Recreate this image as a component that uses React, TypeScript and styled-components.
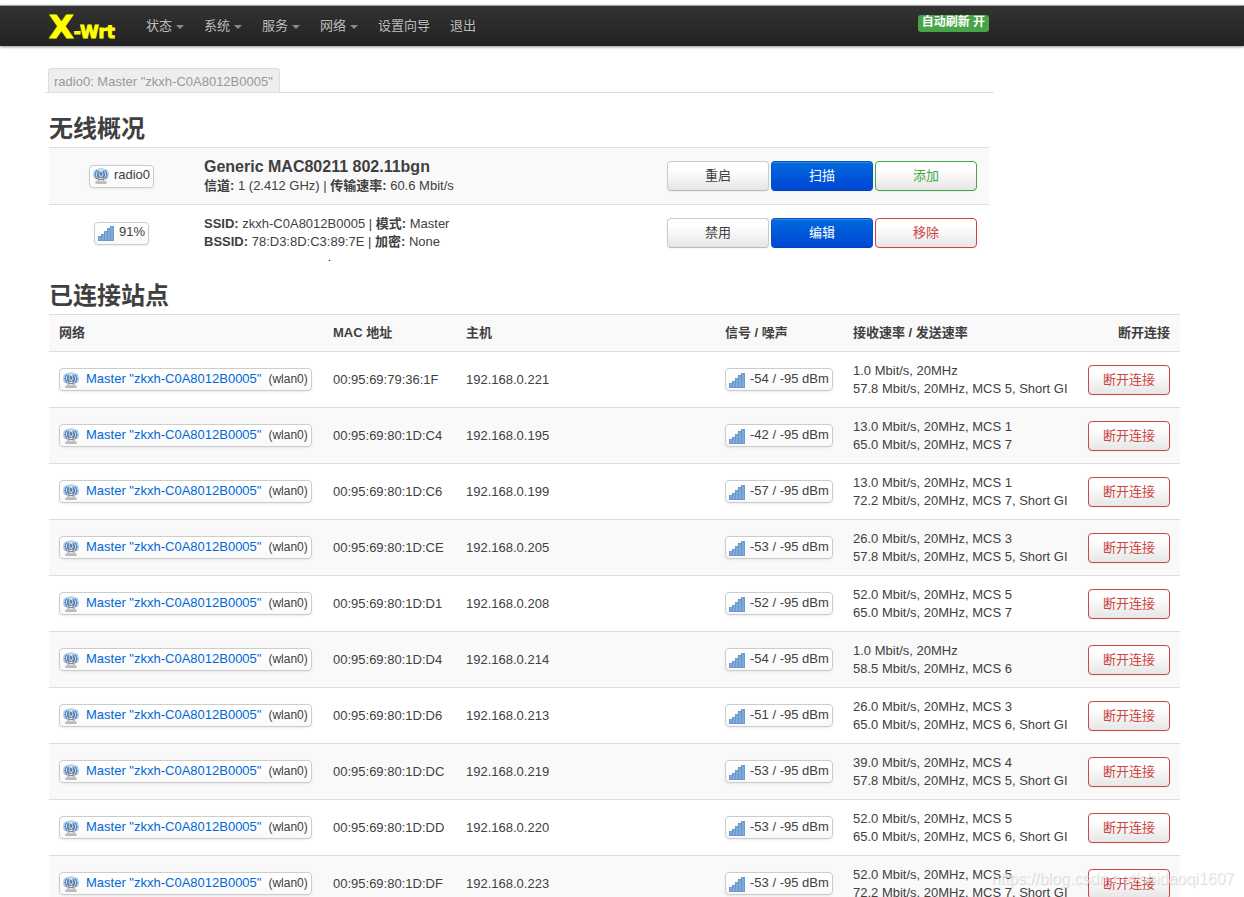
import React from "react";
import styled, { createGlobalStyle, css } from "styled-components";

const GlobalStyle = createGlobalStyle`
  *, *::before, *::after { box-sizing: border-box; }
  body {
    margin: 0;
    background: #fff;
    color: #404040;
    font-family: "Liberation Sans", "Noto Sans CJK SC", sans-serif;
    font-size: 13px;
    line-height: 18px;
  }
  a { color: #0069d6; text-decoration: none; }
`;

const Page = styled.div`
  position: relative;
  height: 100vh;
  overflow: hidden;
  padding-top: 5px;
`;

const TopBar = styled.header`
  height: 41px;
  padding: 0 64px 0 49px;
  border-top: 1px solid #9aa39c;
  background: linear-gradient(to bottom, #333, #222);
  box-shadow: 0 1px 3px rgba(0, 0, 0, 0.25), 0 1px 2px rgba(0, 0, 0, 0.2);
`;

const TopBarInner = styled.div`
  display: flex;
  max-width: 940px;
  height: 40px;
`;

const Brand = styled.a`
  display: block;
  width: 87px;
  color: #ff0;
  font-family: "DejaVu Sans", sans-serif;
  font-size: 32px;
  font-weight: 700;
  line-height: 42px;
  white-space: nowrap;
  -webkit-text-stroke: 1px #ff0;
`;

const BrandSmall = styled.span`
  font-size: 17px;
`;

const Menu = styled.ul`
  display: flex;
  flex: 1;
  margin: 0;
  padding: 0;
  list-style: none;
`;

const MenuLink = styled.a`
  display: flex;
  align-items: center;
  gap: 4px;
  height: 39px;
  padding: 0 10px;
  color: #bfbfbf;
  text-shadow: 0 -1px 0 rgba(0, 0, 0, 0.25);
`;

const Caret = styled.span`
  width: 8px;
  height: 4px;
  margin-top: 2px;
  border-left: 4px solid transparent;
  border-right: 4px solid transparent;
  border-top: 4px solid #8a8a8a;
`;

const RefreshBadge = styled.button`
  align-self: flex-start;
  height: 17px;
  margin-top: 9px;
  padding: 0 4px 2px;
  border: 0;
  border-radius: 3px;
  background: #46a546;
  color: #fff;
  font: bold 12px/15px "Liberation Sans", "Noto Sans CJK SC", sans-serif;
  white-space: nowrap;
`;

const Main = styled.main`
  padding: 22px 64px 0 49px;
`;

const Tabs = styled.nav`
  display: flex;
  max-width: 949px;
  margin-left: -4px;
  padding-left: 3px;
  border-bottom: 1px solid #ddd;
`;

const Tab = styled.a`
  height: 24px;
  padding: 0 6px 0 5px;
  border: 1px solid #ddd;
  border-bottom: 0;
  border-radius: 4px 4px 0 0;
  background: #eee;
  color: #999;
  line-height: 26px;
`;

const Title = styled.h2`
  margin: 18px 0 0;
  font-size: 24px;
  line-height: 36px;
`;

const StationsTitle = styled(Title)`
  margin-top: 17px;
`;

const cellBase = css`
  padding: 0 10px;
  border-top: 1px solid #ddd;
  text-align: left;
  vertical-align: middle;
`;

const Overview = styled.table`
  width: 100%;
  max-width: 940px;
  border-collapse: separate;
  border-spacing: 0;
  table-layout: fixed;

  td { ${cellBase} height: 57px; }
  tr:nth-child(odd) td { background: #f9f9f9; }
  td:first-child { width: 145px; text-align: center; }
  td:last-child { width: 334px; padding-right: 12px; }
`;

const DeviceName = styled.span`
  display: block;
  font-size: 16px;
  font-weight: 700;
  line-height: 20px;
`;

const Actions = styled.div`
  display: grid;
  grid-template-columns: repeat(3, 102px);
  justify-content: end;
  gap: 2px;
`;

type Tone = "plain" | "primary" | "add" | "danger";

const tones = {
  plain: css`
    border-color: #ccc #ccc #bbb;
    color: #404040;
  `,
  primary: css`
    border-color: #0052cc #0052cc #0042b8;
    background: linear-gradient(to bottom, #0069dc, #0046d5);
    color: #fff;
  `,
  add: css`
    border-color: #46a546;
    color: #46a546;
  `,
  danger: css`
    border-color: #cc4444;
    color: #cc4444;
  `,
};

const Button = styled.button<{ $tone: Tone }>`
  height: 30px;
  padding: 0 14px;
  border: 1px solid;
  border-radius: 4px;
  background: linear-gradient(to bottom, #fff, #fff 25%, #e6e6e6);
  box-shadow: inset 0 1px 0 rgba(255, 255, 255, 0.2), 0 1px 2px rgba(0, 0, 0, 0.05);
  font: inherit;
  white-space: nowrap;
  ${(p) => tones[p.$tone]}
`;

const Chip = styled.span<{ $gap?: number }>`
  display: inline-flex;
  align-items: center;
  gap: ${(p) => p.$gap ?? 5}px;
  height: 23px;
  padding: 0 3px 2px;
  border: 1px solid #ccc;
  border-radius: 4px;
  background: linear-gradient(to bottom, #fff, #f9f9f9);
  box-shadow: 0 1px 2px rgba(0, 0, 0, 0.08);
  vertical-align: middle;
  white-space: nowrap;

  svg { flex: none; margin-top: 2px; }
  small { font-size: 12px; }
`;

const Stations = styled.table`
  width: 100%;
  border-collapse: separate;
  border-spacing: 0;
  table-layout: fixed;

  th, td { ${cellBase} height: 56px; white-space: nowrap; }
  th { height: 37px; }
  thead th, tbody tr:nth-child(even) td { background: #f9f9f9; }
  th:last-child, td:last-child { padding-left: 0; text-align: right; }
`;

const Speck = styled.span`
  position: absolute;
  left: 329px;
  top: 260px;
  width: 1px;
  height: 1px;
  background: #00f;
  box-shadow: 0 0 1px #00f;
`;

const Watermark = styled.span`
  position: absolute;
  right: 10px;
  bottom: 9px;
  color: rgba(255, 255, 255, 0.6);
  font-size: 16px;
  text-shadow: 1px 1px 1px rgba(0, 0, 0, 0.16);
  white-space: nowrap;
  pointer-events: none;
`;

const TowerIcon = () => (
  <svg width="16" height="16" viewBox="0 0 16 16" aria-hidden="true">
    <circle cx="8" cy="6.5" r="6.5" fill="#cfe0f3" />
    <g fill="none" strokeLinecap="round">
      <path d="M2 2.200C0 4.800 0 8.200 2 10.800M14 2.200c2 2.600 2 6 0 8.600" stroke="#a9c6e6" />
      <path d="M3.800 2.400C1.800 4.800 1.800 8.200 3.800 10.600M12.200 2.400c2 2.400 2 5.800 0 8.200" stroke="#5b8fca" strokeWidth="1.600" />
      <path d="M5.800 3.400C4.400 5.400 4.400 7.600 5.600 9.400M10.200 3.400c1.400 2 1.400 4.200.2 6" stroke="#4a7fbf" strokeWidth="1.500" />
      <path d="M5 1.400C6.800.5 9.200.5 11 1.400" stroke="#b9d1eb" />
    </g>
    <path d="M8 5.500 4.400 13.500h7.200z" fill="#e4e4e2" />
    <path d="M8 5.500 5 13M8 5.500l3 7.500M6.800 9.500h2.400M5.900 11.500h4.200" fill="none" stroke="#8a8c8e" />
    <circle cx="8" cy="5.500" r="1.500" fill="#6b7580" />
    <path d="M2.500 13.200h11v1.800h-11z" fill="#c4c4c0" />
    <path d="M2.500 15.200h11" stroke="#8e8e8a" strokeWidth=".8" />
  </svg>
);

const SignalIcon = () => (
  <svg width="16" height="16" viewBox="0 0 16 16" aria-hidden="true">
    <path d="M0 11h3V9h3V6h3V3h3V1h4v15H0z" fill="#78a5d6" />
    <path d="M.5 15.500v-4h3v-2h3v-3h3v-3h3v-2h3v14z" fill="none" stroke="#6c9acb" />
    <path d="M3.500 10v5M6.500 7v8M9.500 4v11M12.500 2v13" stroke="#6493c7" strokeOpacity=".7" />
    <path d="M2 12v3M5 10v5M8 7v8M11 4v11M14 2v13" stroke="#8fb5de" strokeOpacity=".7" />
  </svg>
);

const menu = [
  { label: "状态", drop: true },
  { label: "系统", drop: true },
  { label: "服务", drop: true },
  { label: "网络", drop: true },
  { label: "设置向导", drop: false },
  { label: "退出", drop: false },
];

const columns = [274, 133, 259, 128, 235, 102];
const total = columns.reduce((a, b) => a + b, 0);

const stations = [
  ["79:36:1F", 221, -54, "1.0 Mbit/s, 20MHz", "57.8 Mbit/s, 20MHz, MCS 5, Short GI"],
  ["80:1D:C4", 195, -42, "13.0 Mbit/s, 20MHz, MCS 1", "65.0 Mbit/s, 20MHz, MCS 7"],
  ["80:1D:C6", 199, -57, "13.0 Mbit/s, 20MHz, MCS 1", "72.2 Mbit/s, 20MHz, MCS 7, Short GI"],
  ["80:1D:CE", 205, -53, "26.0 Mbit/s, 20MHz, MCS 3", "57.8 Mbit/s, 20MHz, MCS 5, Short GI"],
  ["80:1D:D1", 208, -52, "52.0 Mbit/s, 20MHz, MCS 5", "65.0 Mbit/s, 20MHz, MCS 7"],
  ["80:1D:D4", 214, -54, "1.0 Mbit/s, 20MHz", "58.5 Mbit/s, 20MHz, MCS 6"],
  ["80:1D:D6", 213, -51, "26.0 Mbit/s, 20MHz, MCS 3", "65.0 Mbit/s, 20MHz, MCS 6, Short GI"],
  ["80:1D:DC", 219, -53, "39.0 Mbit/s, 20MHz, MCS 4", "57.8 Mbit/s, 20MHz, MCS 5, Short GI"],
  ["80:1D:DD", 220, -53, "52.0 Mbit/s, 20MHz, MCS 5", "65.0 Mbit/s, 20MHz, MCS 6, Short GI"],
  ["80:1D:DF", 223, -53, "52.0 Mbit/s, 20MHz, MCS 5", "72.2 Mbit/s, 20MHz, MCS 7, Short GI"],
] as const;

export default function App() {
  return (
    <Page>
      <GlobalStyle />
      <TopBar>
        <TopBarInner>
          <Brand href="#">X<BrandSmall>-Wrt</BrandSmall></Brand>
          <Menu>
            {menu.map((m) => (
              <li key={m.label}>
                <MenuLink href="#">
                  {m.label}
                  {m.drop && <Caret />}
                </MenuLink>
              </li>
            ))}
          </Menu>
          <RefreshBadge type="button">自动刷新 开</RefreshBadge>
        </TopBarInner>
      </TopBar>

      <Main>
        <Tabs>
          <Tab href="#">radio0: Master "zkxh-C0A8012B0005"</Tab>
        </Tabs>

        <Title>无线概况</Title>
        <Overview>
          <tbody>
            <tr>
              <td><Chip><TowerIcon />radio0</Chip></td>
              <td>
                <DeviceName>Generic MAC80211 802.11bgn</DeviceName>
                <b>信道:</b> 1 (2.412 GHz) | <b>传输速率:</b> 60.6 Mbit/s
              </td>
              <td>
                <Actions>
                  <Button type="button" $tone="plain">重启</Button>
                  <Button type="button" $tone="primary">扫描</Button>
                  <Button type="button" $tone="add">添加</Button>
                </Actions>
              </td>
            </tr>
            <tr>
              <td><Chip><SignalIcon />91%</Chip></td>
              <td>
                <b>SSID:</b> zkxh-C0A8012B0005 | <b>模式:</b> Master<br />
                <b>BSSID:</b> 78:D3:8D:C3:89:7E | <b>加密:</b> None
              </td>
              <td>
                <Actions>
                  <Button type="button" $tone="plain">禁用</Button>
                  <Button type="button" $tone="primary">编辑</Button>
                  <Button type="button" $tone="danger">移除</Button>
                </Actions>
              </td>
            </tr>
          </tbody>
        </Overview>

        <StationsTitle>已连接站点</StationsTitle>
        <Stations>
          <colgroup>
            {columns.map((w, i) => (
              <col key={i} style={{ width: `${(w / total) * 100}%` }} />
            ))}
          </colgroup>
          <thead>
            <tr>
              <th>网络</th>
              <th>MAC 地址</th>
              <th>主机</th>
              <th>信号 / 噪声</th>
              <th>接收速率 / 发送速率</th>
              <th>断开连接</th>
            </tr>
          </thead>
          <tbody>
            {stations.map(([mac, host, signal, rx, tx]) => (
              <tr key={mac}>
                <td>
                  <Chip $gap={7}>
                    <TowerIcon />
                    <a href="#">Master "zkxh-C0A8012B0005"</a>
                    <small>(wlan0)</small>
                  </Chip>
                </td>
                <td>00:95:69:{mac}</td>
                <td>192.168.0.{host}</td>
                <td><Chip $gap={5}><SignalIcon />{signal} / -95 dBm</Chip></td>
                <td>{rx}<br />{tx}</td>
                <td><Button type="button" $tone="danger">断开连接</Button></td>
              </tr>
            ))}
          </tbody>
        </Stations>
      </Main>
      <Speck />
      <Watermark>https://blog.csdn.net/shidaoqi1607</Watermark>
    </Page>
  );
}
